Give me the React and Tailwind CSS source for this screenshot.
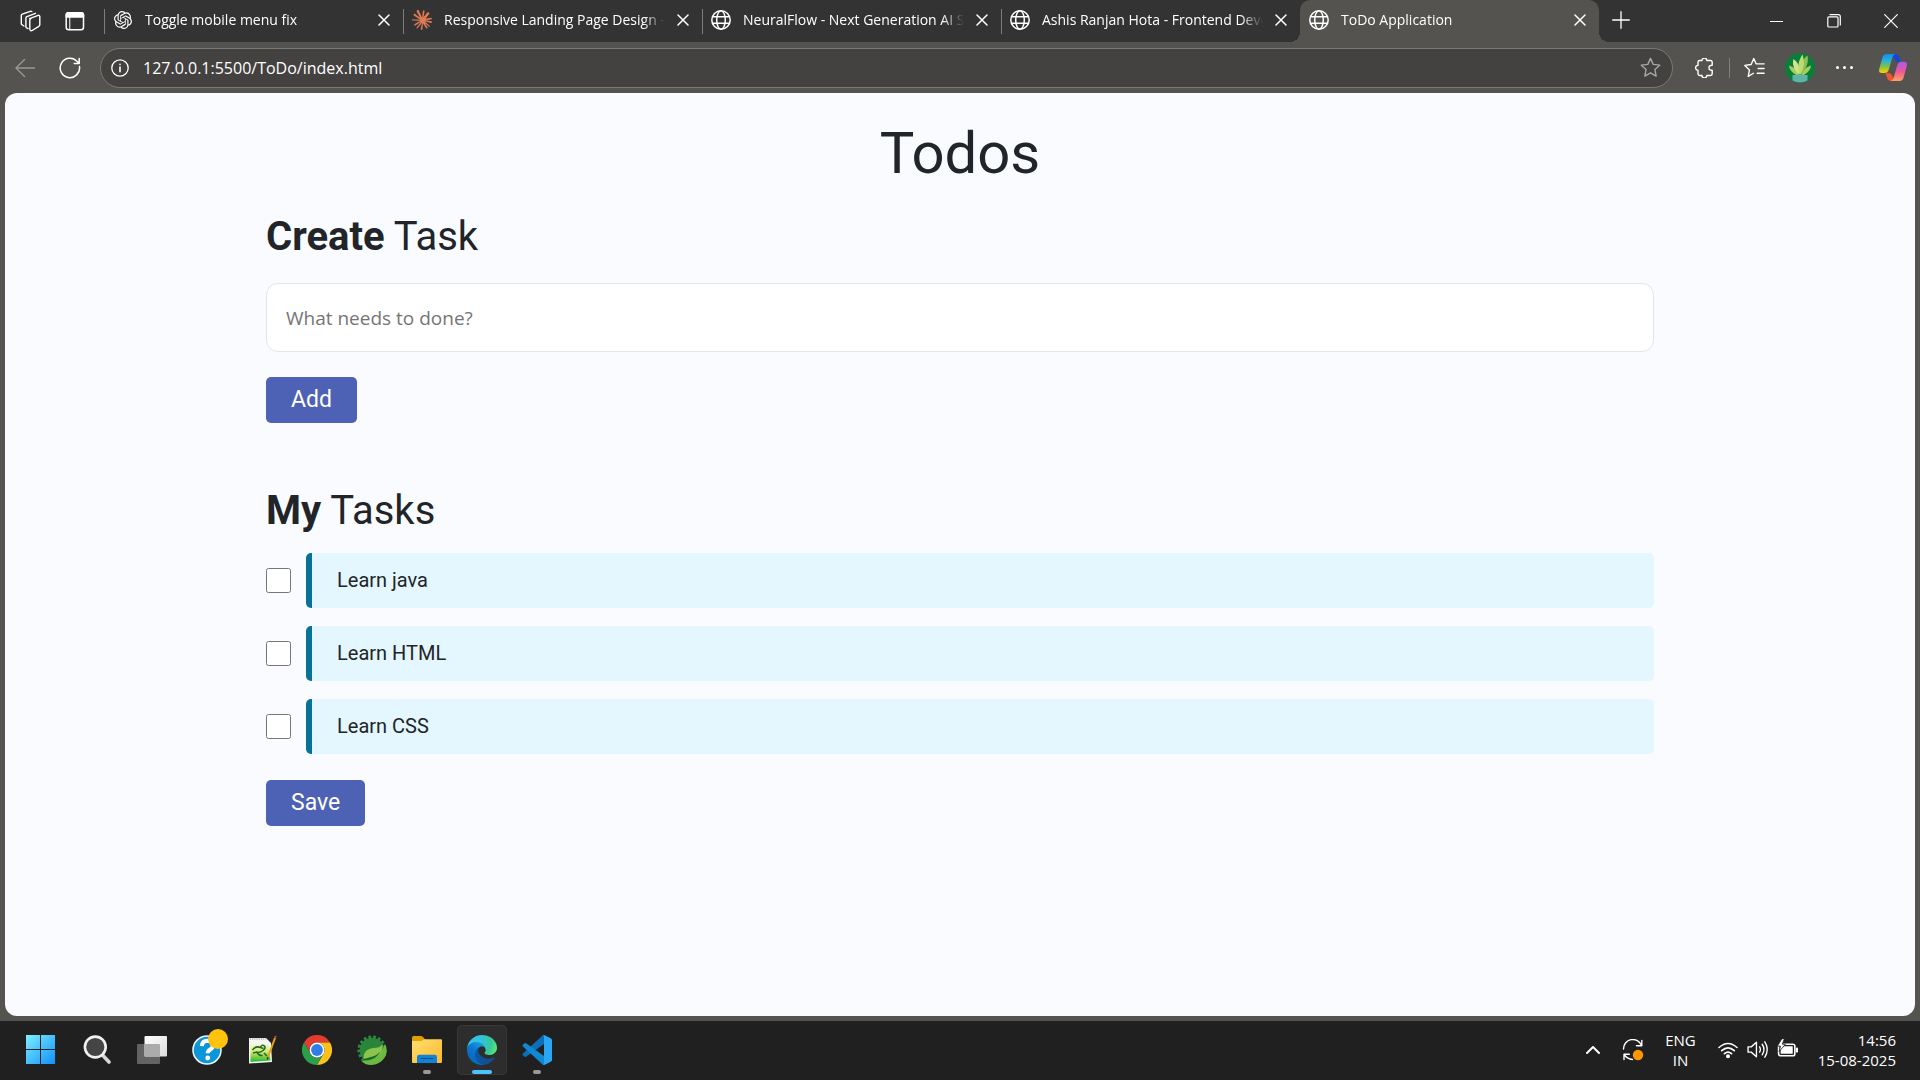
import { SiOpenai, SiClaude } from "react-icons/si";

const TABS = [
  { title: "Toggle mobile menu fix", icon: "openai" },
  { title: "Responsive Landing Page Design - Claude", icon: "claude" },
  { title: "NeuralFlow - Next Generation AI Solutions", icon: "globe" },
  { title: "Ashis Ranjan Hota - Frontend Developer", icon: "globe" },
  { title: "ToDo Application", icon: "globe", active: true },
];

const TASKS = ["Learn java", "Learn HTML", "Learn CSS"];

function Line({ size = "size-5", box = 20, width = 1.4, children }) {
  return (
    <svg
      viewBox={`0 0 ${box} ${box}`}
      className={`${size} shrink-0`}
      fill="none"
      stroke="currentColor"
      strokeWidth={width}
      strokeLinecap="round"
      strokeLinejoin="round"
      aria-hidden="true"
    >
      {children}
    </svg>
  );
}

function Favicon({ name }) {
  if (name === "openai") return <SiOpenai className="size-[18px] mx-px shrink-0" />;
  if (name === "claude") return <SiClaude className="size-5 shrink-0 text-[#e07a55]" />;
  return (
    <Line width={1.5}>
      <circle cx="10" cy="10" r="9.2" />
      <ellipse cx="10" cy="10" rx="4.3" ry="9.2" />
      <path d="M1.6 6.8h16.8M1.6 13.2h16.8" />
    </Line>
  );
}

function Tab({ title, icon, active }) {
  return (
    <div
      role="tab"
      aria-selected={!!active}
      className={
        active
          ? "relative flex min-w-0 flex-1 items-center rounded-t-[10px] bg-[#555350] pr-[5px] pl-[9px]"
          : "relative flex min-w-0 flex-1 items-center pr-[5px] pl-[9px]"
      }
    >
      {active ? (
        <>
          <span className="absolute bottom-0 -left-[10px] size-[10px] bg-[radial-gradient(circle_at_0_0,transparent_10px,#555350_10px)]" />
          <span className="absolute -right-[10px] bottom-0 size-[10px] bg-[radial-gradient(circle_at_100%_0,transparent_10px,#555350_10px)]" />
        </>
      ) : (
        <span className="absolute top-[9px] left-0 h-[25px] w-px bg-[#7d7d7d]" />
      )}
      <div className="flex w-full items-center pb-[3px]">
        <Favicon name={icon} />
        <span className="ml-3 flex-1 overflow-hidden mask-r-from-90% text-[14px] leading-5 whitespace-nowrap">
          {title}
        </span>
        <button aria-label={`Close ${title}`} className="ml-1 grid size-7 place-items-center">
          <Line size="size-[12px]" box={12} width={1.5}>
            <path d="M1 1l10 10M11 1L1 11" />
          </Line>
        </button>
      </div>
    </div>
  );
}

function TabStrip() {
  return (
    <div className="flex h-[42px] bg-[#333333] text-white">
      <button aria-label="Workspaces" className="grid w-[46px] place-items-center pb-px pl-[15px]">
        <Line size="size-[22px]" box={22} width={1.4}>
          <path d="M9.6 8.6l8.6-3.2a1.2 1.2 0 0 1 1.6 1.1v8.3a1.6 1.6 0 0 1-1 1.5l-6.6 4.2a1.6 1.6 0 0 1-2.4-1.3v-9a1.6 1.6 0 0 1 1-1.5" />
          <path d="M8 18.6l-1-.4a1.6 1.6 0 0 1-1.1-1.5V8.2a1.6 1.6 0 0 1 1-1.5l8.6-3.4" />
          <path d="M4 16l-1.7-1a1.6 1.6 0 0 1-1-1.5V5.6a1.6 1.6 0 0 1 1-1.5l8-2.8a1.5 1.5 0 0 1 1.5.3" />
        </Line>
      </button>
      <button aria-label="Tab actions" className="grid w-[58px] place-items-center pb-px">
        <Line size="size-[20px]" box={20} width={1.5}>
          <rect x="1.2" y="1.7" width="17.3" height="17" rx="2.5" />
          <path d="M1.2 6V4a2.3 2.3 0 0 1 2.3-2.3h12.7a2.3 2.3 0 0 1 2.3 2.3v2z" fill="currentColor" />
          <path d="M4.8 6v12.5" strokeWidth="1" />
        </Line>
      </button>
      <div role="tablist" className="flex min-w-0 flex-1">
        {TABS.map((t) => (
          <Tab key={t.title} {...t} />
        ))}
      </div>
      <div className="flex w-[321px] items-center">
        <button aria-label="New tab" className="grid w-[44px] place-items-center pb-[3px]">
          <Line size="size-[18px]" box={18} width={1.3}>
            <path d="M9 .7v16.6M.7 9h16.600" />
          </Line>
        </button>
        <div className="ml-auto flex pr-px">
          <button aria-label="Minimize" className="grid w-[57px] place-items-center">
            <span className="h-px w-[13px] bg-white" />
          </button>
          <button aria-label="Restore" className="grid w-[57px] place-items-center">
            <Line size="size-[14px]" box={14} width={1.2}>
              <rect x=".8" y="2.8" width="10.2" height="10.2" rx="1" />
              <path d="M3 .7h8.3a2 2 0 0 1 2 2V11" />
            </Line>
          </button>
          <button aria-label="Close window" className="grid w-[57px] place-items-center">
            <Line size="size-[14px]" box={14} width={1.2}>
              <path d="M.7.7l12.6 12.6M13.3.7L.7 13.3" />
            </Line>
          </button>
        </div>
      </div>
    </div>
  );
}

function Avatar() {
  return (
    <svg viewBox="0 0 30 30" className="size-[30px]" aria-hidden="true">
      <circle cx="15" cy="15" r="15" fill="#0b7d3b" />
      <g fill="#a5cf5a">
        <path d="M14 23C8 21 4.500 17 4 12.500c5 1.500 8.500 5 10 10.500z" />
        <path d="M16 23c6-2 9.500-6 10-10.500-5 1.500-8.500 5-10 10.500z" />
        <path d="M15.500 22c-1.500-8 1-15 7-19.500 1.500 7-1.500 14-7 19.500z" fill="#8cc152" />
      </g>
      <path d="M14.500 22C8.500 17 7 11 8.500 6c5 3.500 7 9 6 16z" fill="#d3e48f" />
      <path d="M15 22c-3-7-2-14 2.500-20.500C20 9 19 16 15 22z" fill="#bcdc72" />
      <path d="M7.500 22h15v5.500q-7.500 4-15 0z" fill="#5fb3aa" />
    </svg>
  );
}

function Copilot() {
  return (
    <svg viewBox="0 0 28 27" className="h-[27px] w-7" aria-hidden="true">
      <defs>
        <linearGradient id="cpA" x1="0" y1="0" x2="0" y2="1">
          <stop offset="0" stopColor="#0c8ff0" />
          <stop offset=".35" stopColor="#2bb0d8" />
          <stop offset=".65" stopColor="#7cc04a" />
          <stop offset="1" stopColor="#ffd000" />
        </linearGradient>
        <linearGradient id="cpB" x1="0" y1="0" x2="0" y2="1">
          <stop offset="0" stopColor="#a45cf0" />
          <stop offset=".5" stopColor="#f0569a" />
          <stop offset="1" stopColor="#ffa35c" />
        </linearGradient>
      </defs>
      <path d="M12 0h4.500q3 0 4 3.500l1.200 4.200h-2.500q-3 0-4-3.500z" fill="#1646d8" />
      <path d="M16 27h-4q-3 0-4-3.500l-1.500-4.500h3q3 0 4 3.500z" fill="#f2542d" />
      <path d="M7.500 0h9q-2.300.4-3.400 4.200L9.800 15.500Q8.700 19 5.500 19H3Q-.8 19 .3 14.800l2.900-10.500Q4.300 0 7.500 0z" fill="url(#cpA)" />
      <path d="M20.500 27h-9q2.300-.4 3.400-4.200l3.300-11.300Q19.300 7.700 22.500 7.700H25q3.800 0 2.700 4.500l-2.900 10.500Q23.700 27 20.500 27z" fill="url(#cpB)" />
    </svg>
  );
}

const STAR = "M10 1.300l2.600 5.700 6.200.8-4.600 4.200 1.200 6.200L10 15.200l-5.400 3 1.200-6.200L1.200 7.800l6.200-.8z";

function Toolbar() {
  return (
    <div className="flex h-[51px] items-center bg-[#555350] text-white">
      <button aria-label="Back" className="grid w-[50px] place-items-center text-[#9a9896]">
        <Line size="size-[20px]" box={20} width={1.4}>
          <path d="M19.500 10H1M9.500 1.500L1 10l8.500 8.500" />
        </Line>
      </button>
      <button aria-label="Refresh" className="grid w-10 place-items-center">
        <Line size="size-[22px]" box={22} width={1.5}>
          <path d="M20.500 9.500A9.700 9.700 0 1 1 18 4.300l2 2M20.200 1.500v5h-5" />
        </Line>
      </button>
      <div className="ml-[10px] flex h-10 min-w-0 flex-1 items-center rounded-full border border-[#7b7976] bg-[#444240] pr-[11px] pl-[10px]">
        <Line size="size-[18px]" box={18} width={1.3}>
          <circle cx="9" cy="9" r="8.2" />
          <path d="M9 8v4.800M9 5.300v.2" strokeWidth="1.6" />
        </Line>
        <input
          aria-label="Address"
          defaultValue="127.0.0.1:5500/ToDo/index.html"
          className="ml-[14px] min-w-0 flex-1 bg-transparent text-[16px] leading-6 outline-none"
        />
        <button aria-label="Add to favorites" className="text-[#a9a7a5]">
          <Line size="size-[21px]" width={1.3}>
            <path d={STAR} />
          </Line>
        </button>
      </div>
      <div className="flex items-center pl-[22px]">
        <button aria-label="Extensions">
          <Line size="size-[20px]" width={1.4}>
            <path d="M4.700 2.500h2.300a2.400 2.400 0 0 1 4.800 0H15.500A1.700 1.700 0 0 1 17.200 4.200V7.300a2.500 2.500 0 0 0-1.600.2 2.400 2.400 0 0 0 0 4.600q.8.300 1.600.1v3.600a1.700 1.700 0 0 1-1.700 1.700h-3.700a2.400 2.400 0 0 1-4.800 0H4.700a1.700 1.700 0 0 1-1.700-1.700v-3.600a2.400 2.400 0 0 1 0-4.800V4.200A1.700 1.700 0 0 1 4.700 2.500z" />
          </Line>
        </button>
        <span className="mx-[14px] h-5 w-px bg-[#82807e]" />
        <button aria-label="Favorites">
          <Line size="size-[21px]" width={1.3}>
            <path d="M9 15.500L4 18.500l1.200-6.200L.8 8l6-.9L9.300 1.500l2.200 5h7.700M13.500 11h5.700M12.500 15.500h6.700" />
          </Line>
        </button>
        <button aria-label="Profile" className="ml-[20px]">
          <Avatar />
        </button>
        <button aria-label="Settings and more" className="ml-[21px] flex gap-1">
          <span className="size-[3px] rounded-full bg-white" />
          <span className="size-[3px] rounded-full bg-white" />
          <span className="size-[3px] rounded-full bg-white" />
        </button>
        <button aria-label="Copilot" className="mr-[13px] ml-[26px]">
          <Copilot />
        </button>
      </div>
    </div>
  );
}

function TodoPage() {
  const action = "rounded-[5px] bg-[#4d62b5] px-[25px] h-[46px] text-[23px] leading-6 text-white";
  return (
    <main className="mx-[5px] mb-[5px] flex-1 rounded-[12px] bg-[#fafbff] px-6 pt-[25px] font-[Roboto,sans-serif] text-[#212529]">
      <div className="mx-auto flex max-w-[1388px] flex-col items-start">
        <h1 className="self-center text-[58px] leading-[70px]">Todos</h1>
        <h2 className="mt-[25px] text-[40px] leading-12">
          <b>Create</b> Task
        </h2>
        <input
          type="text"
          aria-label="New task"
          placeholder="What needs to done?"
          className="mt-[22px] h-[69px] w-full rounded-[12px] border border-[#e3e5ea] bg-white px-[19px] font-['Open_Sans',sans-serif] text-[19px] placeholder:text-[#757575]"
        />
        <button className={`mt-[25px] ${action}`}>Add</button>
        <h2 className="mt-16 text-[40px] leading-12">
          <b>My</b> Tasks
        </h2>
        <ul className="mt-[18px] flex w-full flex-col gap-[18px]">
          {TASKS.map((task, i) => (
            <li key={task} className="flex items-center gap-[15px]">
              <input id={`task-${i}`} type="checkbox" className="size-[25px] shrink-0" />
              <label
                htmlFor={`task-${i}`}
                className="flex-1 rounded-[5px] border-l-[6px] border-[#077295] bg-[#e4f6fe] py-[14px] pl-[25px] text-[20px] leading-[27px]"
              >
                {task}
              </label>
            </li>
          ))}
        </ul>
        <button className={`mt-[26px] ${action}`}>Save</button>
      </div>
    </main>
  );
}

function WindowsLogo() {
  return (
    <svg viewBox="0 0 29 29" className="size-[29px]" aria-hidden="true">
      <defs>
        <linearGradient id="win" x1="0" y1="0" x2="29" y2="29" gradientUnits="userSpaceOnUse">
          <stop offset="0" stopColor="#7ef0ff" />
          <stop offset="1" stopColor="#0f90fb" />
        </linearGradient>
      </defs>
      <path d="M0 0h14v14H0zM15 0h14v14H15zM0 15h14v14H0zM15 15h14v14H15z" fill="url(#win)" />
    </svg>
  );
}

function SearchLogo() {
  return (
    <svg viewBox="0 0 28 29" className="h-[29px] w-7" aria-hidden="true">
      <path d="M19 19.500l7 7.500" stroke="#d5d8da" strokeWidth="3.6" strokeLinecap="round" />
      <circle cx="12.300" cy="12" r="10.4" fill="#454545" stroke="#f1f1f1" strokeWidth="2.6" />
    </svg>
  );
}

function TaskViewLogo() {
  return (
    <svg viewBox="0 0 30 28" className="h-7 w-[30px]" aria-hidden="true">
      <defs>
        <linearGradient id="tv" x1="0" y1="0" x2="1" y2="1">
          <stop offset="0" stopColor="#fff" />
          <stop offset="1" stopColor="#dcdcdc" />
        </linearGradient>
      </defs>
      <rect y="8" width="23" height="20" rx="1" fill="#636363" />
      <rect x="7.500" y="0" width="22.500" height="20.500" rx="1" fill="url(#tv)" />
      <path d="M7.500 8H22q1 0 1 1v11.500H7.500z" fill="#ababab" />
    </svg>
  );
}

function HelpLogo() {
  return (
    <svg viewBox="0 0 36 36" className="size-9" aria-hidden="true">
      <circle cx="15" cy="21" r="14" fill="#0a96d8" stroke="#e9f5fb" strokeWidth="1.6" />
      <path d="M9.800 17.200q.4-5.400 5.700-5.400 5.300.2 5.300 4.600 0 2.600-2.900 4.300-2.200 1.400-2.200 3.600" fill="none" stroke="#fff" strokeWidth="4" />
      <circle cx="15.700" cy="29" r="2.4" fill="#fff" />
      <circle cx="26" cy="10" r="10" fill="#ffc20e" />
    </svg>
  );
}

function NotepadLogo() {
  return (
    <svg viewBox="0 0 30 30" className="size-[30px]" aria-hidden="true">
      <defs>
        <linearGradient id="np" x1="0" y1="0" x2="0" y2="1">
          <stop offset="0" stopColor="#f7faee" />
          <stop offset=".45" stopColor="#d6e86a" />
          <stop offset="1" stopColor="#22b62c" />
        </linearGradient>
      </defs>
      <path d="M2 3h17l5 5 1 19L2 28.500z" fill="#f5f5f5" />
      <path d="M3.500 8H22l1.500 17.500L3.500 27z" fill="url(#np)" />
      <path d="M3 4h16" stroke="#a9a9a9" strokeWidth="1.6" strokeDasharray="1 1.200" />
      <path d="M5.500 15q3-4.500 8-2.500 1-3.500 4-1.500 1.500 2.500-1.500 4.500-3 2.500-6 1.800 2 3.700 5.500 3.200M6 18l4-1M17 18l3 3M13.500 12.500l3 1" fill="none" stroke="#1d6b2c" strokeWidth="1.5" />
      <path d="M21 22L28 3" stroke="#e8a413" strokeWidth="2" />
      <path d="M28 3l.8-2.200" stroke="#b44a38" strokeWidth="2" />
      <path d="M21 22l-.7 2.500" stroke="#3f3423" strokeWidth="1.4" />
    </svg>
  );
}

function ChromeLogo() {
  return (
    <svg viewBox="0 0 30 30" className="size-[30px]" aria-hidden="true">
      <path d="M2 7.500A15 15 0 0 1 28 7.500H15A7.500 7.500 0 0 0 8.500 18.750z" fill="#e33b2e" />
      <path d="M28 7.500A15 15 0 0 1 15 30l6.500-11.250A7.500 7.500 0 0 0 15 7.500z" fill="#fcc21b" />
      <path d="M15 30A15 15 0 0 1 2 7.500l6.500 11.250a7.500 7.500 0 0 0 13 0z" fill="#2c9f4b" />
      <circle cx="15" cy="15" r="7.5" fill="#fff" />
      <circle cx="15" cy="15" r="5.9" fill="#2f7de9" />
    </svg>
  );
}

function SpringLogo() {
  return (
    <svg viewBox="0 0 30 30" className="size-[30px]" aria-hidden="true">
      <circle cx="15" cy="15" r="12.8" fill="none" stroke="#2e8b3d" strokeWidth="3.6" strokeDasharray="2.700 2" />
      <circle cx="15" cy="15" r="12.3" fill="#2a853b" />
      <path d="M28 9q4 8-1 14.500Q22 30 14 30q-6 0-10-4.500 10-1 14-4 7-4 10-12.500z" fill="#6cb944" />
      <path d="M25.500 9.500q1 11-10 13.500-5 1-9 .5Q6 16 13 13.800q3-.8 6.500-1 4-.5 6-3.300z" fill="#8ac44d" />
      <path d="M3.500 25.500q7.500.5 12-1.500 5-2 8-7.500-4.500 4.500-9.500 5.500-5 1.200-10.500 3.500z" fill="#17682b" />
    </svg>
  );
}

function ExplorerLogo() {
  return (
    <svg viewBox="0 0 30 27" className="h-[27px] w-[30px]" aria-hidden="true">
      <defs>
        <linearGradient id="fx" x1="0" y1="0" x2="1" y2="1">
          <stop offset="0" stopColor="#ffdf70" />
          <stop offset="1" stopColor="#fbb92b" />
        </linearGradient>
      </defs>
      <path d="M0 1.500Q0 0 1.500 0h7Q10 0 11 1l2 2.500V8H0z" fill="#e09f05" />
      <path d="M0 5h9.500l3-1.800H29q1 0 1 1V26q0 1-1 1H1q-1 0-1-1z" fill="url(#fx)" />
      <path d="M5 27v-6q0-2.300 2.300-2.300h15.400q2.300 0 2.300 2.300v6z" fill="#1182d6" />
      <path d="M9 22.500h12" stroke="#0a4f92" strokeWidth="1.2" strokeLinecap="round" />
    </svg>
  );
}

function EdgeLogo() {
  return (
    <svg viewBox="0 0 256 256" className="size-[30px]" aria-hidden="true">
      <defs>
        <linearGradient id="eA" x1="63" y1="177" x2="241" y2="177" gradientUnits="userSpaceOnUse">
          <stop offset="0" stopColor="#0c59a4" />
          <stop offset="1" stopColor="#114a8b" />
        </linearGradient>
        <linearGradient id="eB" x1="157" y1="100" x2="46" y2="222" gradientUnits="userSpaceOnUse">
          <stop offset="0" stopColor="#1b9de2" />
          <stop offset=".5" stopColor="#0b78d0" />
          <stop offset="1" stopColor="#0669bc" />
        </linearGradient>
        <radialGradient id="eC" cx="26" cy="48" r="245" gradientUnits="userSpaceOnUse">
          <stop offset="0" stopColor="#35c1f1" />
          <stop offset=".35" stopColor="#2fc3df" />
          <stop offset=".75" stopColor="#36c99a" />
          <stop offset="1" stopColor="#66eb6e" />
        </radialGradient>
      </defs>
      <path d="M231 190.500c-3.400 1.800-6.900 3.400-10.500 4.700a101.900 101.900 0 0 1-35.900 6.500c-47.300 0-88.500-32.500-88.500-74.300 0-11.400 6.400-21.900 16.400-27.300-42.800 1.800-53.800 46.400-53.800 72.500 0 73.900 68.100 81.400 82.800 81.400 7.900 0 19.800-2.300 27-4.600l1.300-.4a128.300 128.300 0 0 0 66.600-52.800 4 4 0 0 0-5.400-5.700z" fill="url(#eA)" />
      <path d="M105.700 241.400A79.200 79.200 0 0 1 83 220.100a80.700 80.700 0 0 1 29.500-120c3.100-1.500 8.500-4.100 15.600-4a32.400 32.400 0 0 1 25.700 13 31.900 31.900 0 0 1 6.300 18.700c0-.2 24.500-79.600-80-79.600-43.900 0-80 41.600-80 78.200-.2 19.300 4 38.500 12.100 56a128 128 0 0 0 156.400 67.100 75.500 75.500 0 0 1-62.800-8z" fill="url(#eB)" />
      <path d="M152.300 148.900c-.8 1-3.300 2.500-3.300 5.700 0 2.600 1.700 5.100 4.700 7.200 14.400 10 41.500 8.700 41.600 8.700 10.700 0 21.100-2.900 30.300-8.300A61.400 61.400 0 0 0 256 109.300c.3-22.400-8-37.300-11.300-43.900C223.500 23.900 177.700 0 128 0A128 128 0 0 0 0 126.200c.5-36.500 36.800-66 80-66 3.500 0 23.500.3 42 10.100 16.300 8.600 24.900 18.900 30.800 29.200 6.200 10.700 7.300 24.100 7.300 29.500 0 5.300-2.700 13.300-7.800 19.900z" fill="url(#eC)" />
    </svg>
  );
}

function CodeLogo() {
  return (
    <svg viewBox="0 0 30 30" className="size-[30px]" aria-hidden="true">
      <path d="M29 3.500L22.500.3q-1.200-.5-2.200.4L.9 18.500q-.9.900 0 1.700l1.700 1.500q.7.600 1.500.1L28 4.800z" fill="#0b6fb8" />
      <path d="M29 26.500l-6.500 3.200q-1.200.5-2.200-.4L.9 11.500q-.9-.9 0-1.700l1.700-1.500q.7-.6 1.500-.1L28 25.200z" fill="#1287d4" />
      <path d="M22.500 29.700q-1.200.5-2.200-.5 1.700 1 1.700-1V1.800q0-2-1.700-1 1-1 2.200-.5L29 3.400q1 .5 1 1.700v19.800q0 1.200-1 1.700z" fill="#2aa7f2" />
    </svg>
  );
}

const APPS = [
  { name: "Start", Logo: WindowsLogo },
  { name: "Search", Logo: SearchLogo },
  { name: "Task View", Logo: TaskViewLogo },
  { name: "Get Help", Logo: HelpLogo, badge: true },
  { name: "Notepad++", Logo: NotepadLogo },
  { name: "Chrome", Logo: ChromeLogo },
  { name: "Spring Tools", Logo: SpringLogo },
  { name: "File Explorer", Logo: ExplorerLogo, state: "open" },
  { name: "Edge", Logo: EdgeLogo, state: "active" },
  { name: "Visual Studio Code", Logo: CodeLogo, state: "open" },
];

function Taskbar() {
  return (
    <footer className="flex h-[59px] items-center justify-between bg-[#202020] pb-[2px] text-white">
      <nav className="flex gap-[5px] pl-[15px]">
        {APPS.map(({ name, Logo, state, badge }) => (
          <button
            key={name}
            aria-label={name}
            className={
              state === "active"
                ? "relative grid size-[50px] place-items-center rounded-[5px] bg-[#2d2d2d] ring-1 ring-[#383838] ring-inset"
                : badge
                  ? "relative grid size-[50px] place-items-center pb-[6px] pl-[6px]"
                  : "relative grid size-[50px] place-items-center first:mr-0.5"
            }
          >
            <Logo />
            {state === "active" && <span className="absolute bottom-px h-1 w-5 rounded-full bg-[#4cc2ff]" />}
            {state === "open" && <span className="absolute bottom-px h-1 w-2 rounded-full bg-[#9a9a9a]" />}
          </button>
        ))}
      </nav>
      <div className="flex items-center pr-[24px] text-[15px] leading-5">
        <button aria-label="Show hidden icons">
          <Line size="size-[14px]" box={14} width={2}>
            <path d="M1 10l6-6 6 6" />
          </Line>
        </button>
        <button aria-label="Updates available" className="ml-[22px]">
          <Line size="size-[22px]" box={22} width={1.4}>
            <path d="M1.500 10A9.300 9.300 0 0 1 19.500 6.500M19.800 1.500v5.300h-5.300M2 20.500v-5.300h5.300M2.500 16q3 4 8 4.500" />
            <circle cx="16" cy="16" r="5.2" fill="#ff9500" stroke="none" />
          </Line>
        </button>
        <button className="ml-[21px] text-center">
          ENG
          <br />
          IN
        </button>
        <button aria-label="Network, volume and battery" className="ml-[22px] flex items-center gap-[9px]">
          <Line size="size-[20px]" width={1.6}>
            <path d="M1 7.500q9-8 18 0M3.700 10.700q6.300-5.700 12.600 0M6.400 13.700q3.600-3 7.200 0" />
            <circle cx="10" cy="16.300" r="1.2" fill="currentColor" />
          </Line>
          <Line size="size-[21px]" width={1.3}>
            <path d="M1 7.500h3L9 3v14l-5-4.500H1zM12 7.500q1.500 2.500 0 5M14.500 5q3.300 5 0 10M17 2.700q4.500 7.300 0 14.600" />
          </Line>
          <Line size="size-[21px]" width={1.5}>
            <rect x="1.500" y="5" width="15.500" height="11" rx="2" />
            <rect x="3.500" y="7" width="11.500" height="7" rx=".5" fill="currentColor" stroke="none" />
            <path d="M19 9v3" strokeWidth="2" />
            <path d="M4.500 0L.3 6.800h3L2 12l6-7H5L7 0z" fill="currentColor" stroke="#202020" strokeWidth=".8" />
          </Line>
        </button>
        <button className="ml-[20px] text-right">
          14:56
          <br />
          15-08-2025
        </button>
      </div>
    </footer>
  );
}

export default function App() {
  return (
    <div className="flex min-h-screen flex-col bg-[#555350] font-['Open_Sans',sans-serif]">
      <TabStrip />
      <Toolbar />
      <TodoPage />
      <Taskbar />
    </div>
  );
}
